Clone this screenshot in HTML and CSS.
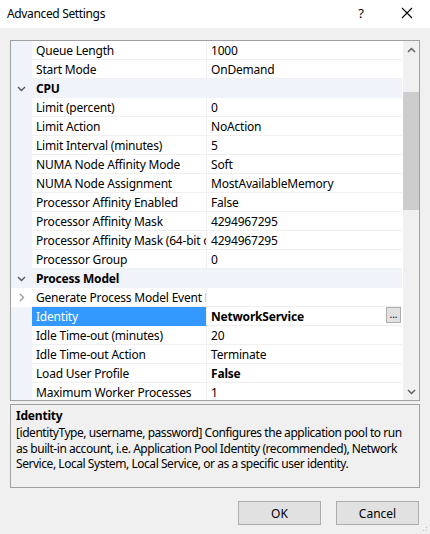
FILE: index.html
```html
<!DOCTYPE html>
<html>
<head>
<meta charset="utf-8">
<link rel="stylesheet" href="styles.css">
</head>
<body>
<div class="window">
  <div class="titlebar">
    <span class="title">Advanced Settings</span>
    <span class="help">?</span>
    <span class="close"><svg width="12" height="12" viewBox="0 0 12 12"><path d="M1 1L11 11M11 1L1 11" stroke="#000" stroke-width="1.1" fill="none"/></svg></span>
  </div>
  <div class="content">
    <div class="grid">
      <div class="rows">
        <div class="row"><span class="gut"></span><span class="name">Queue Length</span><span class="val">1000</span></div>
        <div class="row"><span class="gut"></span><span class="name">Start Mode</span><span class="val">OnDemand</span></div>
        <div class="row cat"><span class="gut"><svg width="9" height="6" viewBox="0 0 9 6"><path d="M1 1L4.5 4.5L8 1" stroke="#555" stroke-width="1.4" fill="none"/></svg></span><span class="catname">CPU</span></div>
        <div class="row"><span class="gut"></span><span class="name">Limit (percent)</span><span class="val">0</span></div>
        <div class="row"><span class="gut"></span><span class="name">Limit Action</span><span class="val">NoAction</span></div>
        <div class="row"><span class="gut"></span><span class="name">Limit Interval (minutes)</span><span class="val">5</span></div>
        <div class="row"><span class="gut"></span><span class="name">NUMA Node Affinity Mode</span><span class="val">Soft</span></div>
        <div class="row"><span class="gut"></span><span class="name">NUMA Node Assignment</span><span class="val">MostAvailableMemory</span></div>
        <div class="row"><span class="gut"></span><span class="name">Processor Affinity Enabled</span><span class="val">False</span></div>
        <div class="row"><span class="gut"></span><span class="name">Processor Affinity Mask</span><span class="val">4294967295</span></div>
        <div class="row"><span class="gut"></span><span class="name">Processor Affinity Mask (64-bit option)</span><span class="val">4294967295</span></div>
        <div class="row"><span class="gut"></span><span class="name">Processor Group</span><span class="val">0</span></div>
        <div class="row cat"><span class="gut"><svg width="9" height="6" viewBox="0 0 9 6"><path d="M1 1L4.5 4.5L8 1" stroke="#555" stroke-width="1.4" fill="none"/></svg></span><span class="catname">Process Model</span></div>
        <div class="row"><span class="gut white"><svg width="6" height="9" viewBox="0 0 6 9"><path d="M1 1L4.5 4.5L1 8" stroke="#999" stroke-width="1.3" fill="none"/></svg></span><span class="name">Generate Process Model Event Log Entry</span><span class="val"></span></div>
        <div class="row"><span class="gut"></span><span class="name sel">Identity</span><span class="val bold">NetworkService<span class="dots">...</span></span></div>
        <div class="row"><span class="gut"></span><span class="name">Idle Time-out (minutes)</span><span class="val">20</span></div>
        <div class="row"><span class="gut"></span><span class="name">Idle Time-out Action</span><span class="val">Terminate</span></div>
        <div class="row"><span class="gut"></span><span class="name">Load User Profile</span><span class="val bold">False</span></div>
        <div class="row"><span class="gut"></span><span class="name">Maximum Worker Processes</span><span class="val">1</span></div>
      </div>
      <div class="scrollbar">
        <div class="arrow"><svg width="9" height="6" viewBox="0 0 9 6"><path d="M1 5L4.5 1.5L8 5" stroke="#606060" stroke-width="1.5" fill="none"/></svg></div>
        <div class="track"><div class="thumb"></div></div>
        <div class="arrow"><svg width="9" height="6" viewBox="0 0 9 6"><path d="M1 1L4.5 4.5L8 1" stroke="#606060" stroke-width="1.5" fill="none"/></svg></div>
      </div>
    </div>
    <div class="desc">
      <div class="desc-title">Identity</div>
      <div class="desc-text">[identityType, username, password] Configures the application pool to run as built-in account, i.e. Application Pool Identity (recommended), Network Service, Local System, Local Service, or as a specific user identity.</div>
    </div>
    <div class="buttons">
      <button class="btn">OK</button>
      <button class="btn">Cancel</button>
    </div>
  </div>
  <div class="grip"></div>
</div>
</body>
</html>
```
FILE: styles.css
```css
* { box-sizing: border-box; }
html, body { margin: 0; padding: 0; }
body {
  width: 430px;
  height: 534px;
  overflow: hidden;
  font-family: "Noto Sans", "Open Sans", sans-serif;
  font-size: 12px;
  color: #000;
  background: #f0f0f0;
}
.window { position: relative; width: 430px; height: 534px; }
.titlebar {
  height: 28px;
  background: #fff;
  display: flex;
  align-items: center;
  padding-left: 7px;
  padding-bottom: 2px;
}
.title { flex: 1; font-size: 12px; letter-spacing: -0.35px; }
.help { width: 46px; text-align: center; font-size: 13px; margin-left: 1px; }
.close { width: 46px; display: flex; justify-content: center; align-items: center; }
.content { padding: 12px 10px 0 10px; }
.grid {
  height: 361px;
  border: 1px solid #a0a0a0;
  background: #fff;
  display: flex;
  overflow: hidden;
}
.rows { width: 391px; overflow: hidden; }
.row {
  display: flex;
  height: 19px;
  white-space: nowrap;
}
.gut {
  width: 21px;
  flex: none;
  background: #f0f3f9;
  display: flex;
  align-items: center;
  justify-content: center;
}
.gut.white { background: #fff; }
.name, .val {
  border-bottom: 1px solid #f0f0f0;
  padding-left: 4px;
  padding-top: 1px;
  line-height: 17px;
  overflow: hidden;
  letter-spacing: -0.2px;
}
.name { width: 175px; flex: none; border-right: 1px solid #f0f0f0; }
.val { flex: 1; position: relative; }
.name.sel { background: #3399ff; color: #fff; border-bottom-color: #3399ff; }
.bold { font-weight: bold; }
.cat { background: #f0f3f9; }
.catname { font-weight: bold; padding-left: 4px; line-height: 19px; letter-spacing: -0.2px; }
.dots {
  position: absolute;
  right: 1px;
  top: 0px;
  width: 15px;
  height: 16px;
  border: 1px solid #adadad;
  background: #e1e1e1;
  font-weight: normal;
  font-size: 10px;
  line-height: 12px;
  text-align: center;
  letter-spacing: 0;
}
.scrollbar {
  width: 17px;
  background: #f0f0f0;
  display: flex;
  flex-direction: column;
  border-left: 1px solid #fff;
}
.arrow { height: 17px; display: flex; align-items: center; justify-content: center; }
.track { flex: 1; position: relative; }
.thumb { position: absolute; left: 0; right: 0; top: 34px; height: 118px; background: #cdcdcd; }
.desc {
  margin-top: 3px;
  height: 84px;
  border: 1px solid #a0a0a0;
  padding: 3px 5px;
}
.desc-title { font-weight: bold; line-height: 16px; letter-spacing: -0.2px; }
.desc-text { line-height: 15.5px; letter-spacing: -0.45px; padding-top: 1px; }
.buttons {
  display: flex;
  justify-content: flex-end;
  gap: 15px;
  margin-top: 13px;
  padding-right: 1px;
}
.btn {
  width: 83px;
  height: 24px;
  border: 1px solid #adadad;
  background: #e1e1e1;
  font-family: inherit;
  font-size: 12px;
  color: #000;
  padding: 0;
}
.grip {
  position: absolute;
  right: 1px;
  bottom: 1px;
  width: 10px;
  height: 10px;
  background-image: radial-gradient(circle, #b8b8b8 0.8px, transparent 1px);
  background-size: 3px 3px;
  clip-path: polygon(100% 0, 100% 100%, 0 100%);
}
```
